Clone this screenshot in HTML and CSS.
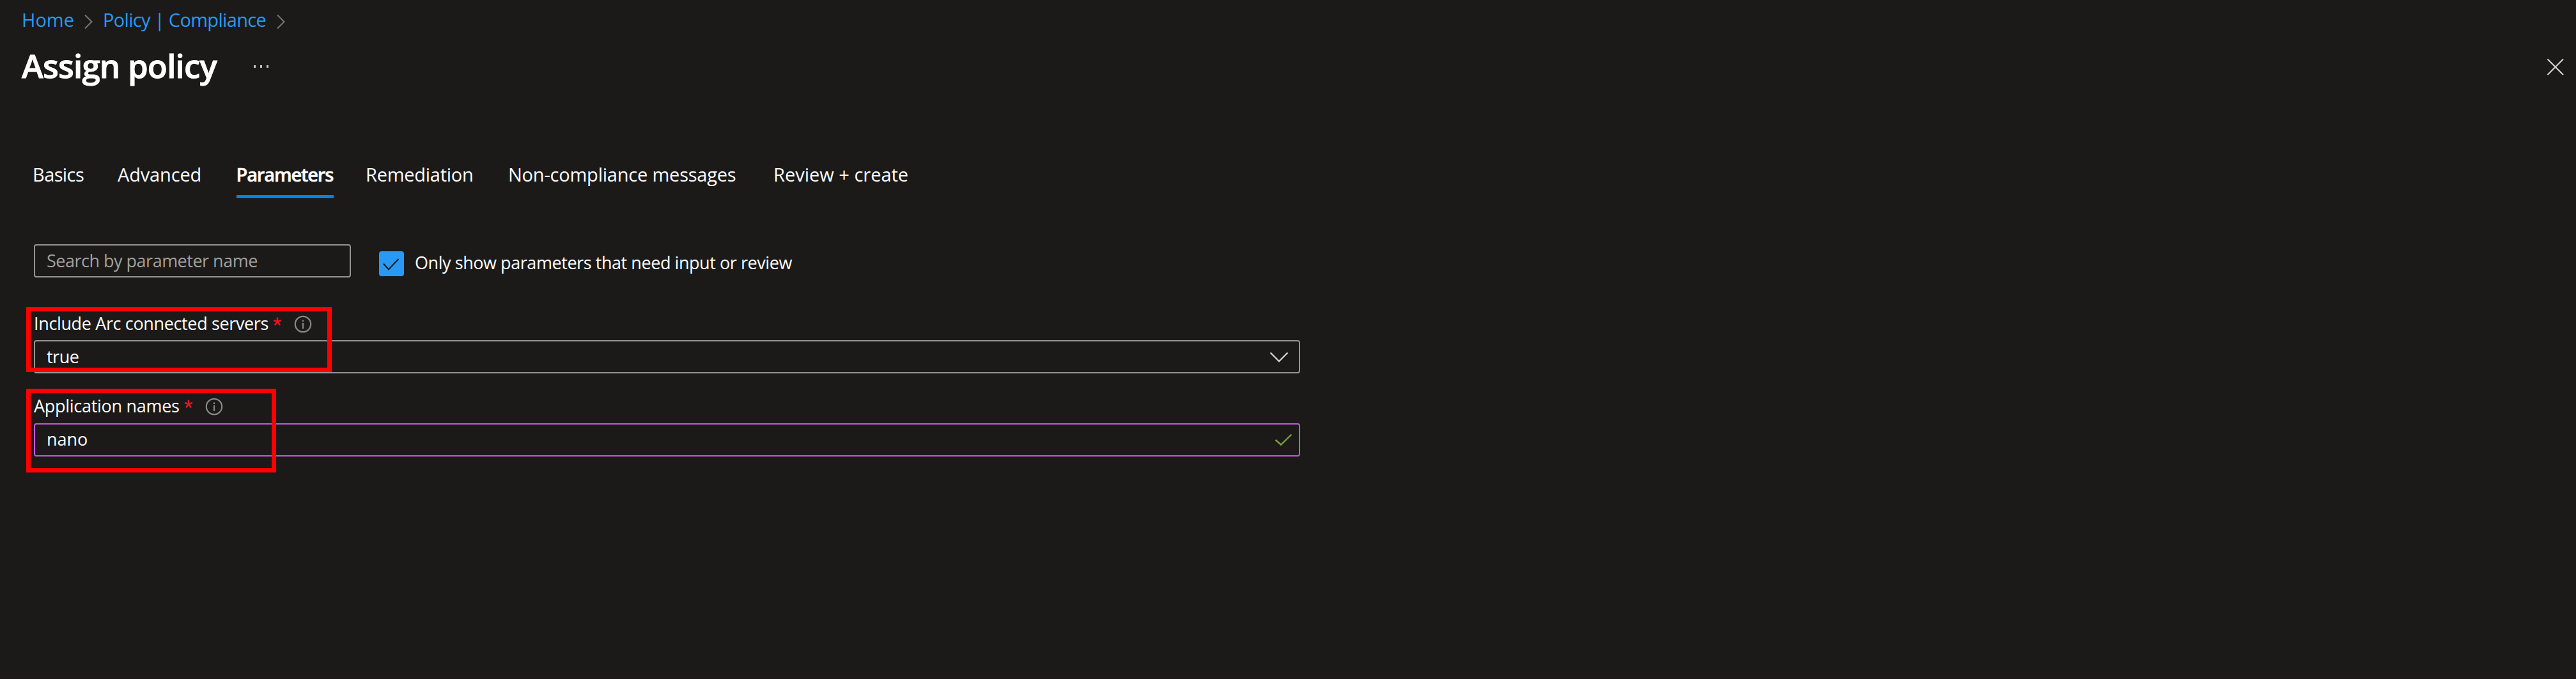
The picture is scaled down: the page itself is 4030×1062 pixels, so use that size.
FILE: index.html
```
<!DOCTYPE html>
<html lang="en">
<head>
<meta charset="utf-8">
<title>Assign policy</title>
<link rel="stylesheet" href="styles.css">
</head>
<body>
<main class="blade">
  <nav class="breadcrumb">
    <a class="crumb-home">Home</a>
    <svg class="crumb-arrow" viewBox="0 0 16 24"><path d="M2 1.5 12.5 12 2 22.5"/></svg>
    <a class="crumb-policy">Policy | Compliance</a>
    <svg class="crumb-arrow" viewBox="0 0 16 24"><path d="M2 1.5 12.5 12 2 22.5"/></svg>
  </nav>
  <header class="title-row">
    <h1>Assign policy</h1>
    <span class="more"><i></i><i></i><i></i></span>
    <svg class="close" viewBox="0 0 28 28"><path d="M1.5 1.5 26 26M26 1.5 1.5 26"/></svg>
  </header>
  <div class="tabs">
    <a class="tab basics">Basics</a>
    <a class="tab advanced">Advanced</a>
    <a class="tab active">Parameters</a>
    <a class="tab remediation">Remediation</a>
    <a class="tab messages">Non-compliance messages</a>
    <a class="tab">Review + create</a>
  </div>
  <div class="filters">
    <div class="box search">Search by parameter name</div>
    <span class="checkbox"><svg viewBox="0 0 39 39"><path d="M7 19.5 15 28.5 30.5 12"/></svg></span>
    <span class="check-label">Only show parameters that need input or review</span>
  </div>
  <section class="field arc">
    <div class="field-label">
      <span class="arc-name">Include Arc connected servers</span>
      <svg class="required" viewBox="0 0 14 14"><path d="M7 7V.5M7 7 13 5M7 7l4 5.5M7 7l-4 5.5M7 7 1 5"/></svg>
      <svg class="info" viewBox="0 0 28 28"><circle cx="14" cy="14" r="12.2"/><path d="M14 12v9M14 7.5v2.5"/></svg>
    </div>
    <div class="box select"><span>true</span><svg class="chevron" viewBox="0 0 30 18"><path d="M1.5 1.5 15 15 28.5 1.5"/></svg></div>
    <div class="mark"></div>
  </section>
  <section class="field app">
    <div class="field-label">
      <span class="app-name">Application names</span>
      <svg class="required" viewBox="0 0 14 14"><path d="M7 7V.5M7 7 13 5M7 7l4 5.5M7 7l-4 5.5M7 7 1 5"/></svg>
      <svg class="info" viewBox="0 0 28 28"><circle cx="14" cy="14" r="12.2"/><path d="M14 12v9M14 7.5v2.5"/></svg>
    </div>
    <div class="box edited"><span>nano</span><svg class="valid" viewBox="0 0 28 20"><path d="M1.5 10 10 17.5 26.5 1.5"/></svg></div>
    <div class="mark"></div>
  </section>
</main>
</body>
</html>
```
FILE: styles.css
```
* { box-sizing: border-box; }
body {
  margin: 0;
  background: #1b1a19;
  color: #fff;
  font-family: "Open Sans", "Noto Sans", sans-serif;
}
svg { display: block; fill: none; flex: none; }
.blade {
  height: 1062px;
  padding-top: 11px;
  border-bottom: 1px solid #1a1317;
  overflow: hidden;
}
.breadcrumb {
  display: flex;
  align-items: center;
  height: 40px;
  padding-left: 34px;
  font-size: 29px;
  line-height: 40px;
  color: #2899f5;
  white-space: nowrap;
}
.crumb-home { width: 97px; }
.crumb-policy { width: 271px; margin-left: 14px; letter-spacing: -0.68px; }
.crumb-arrow { width: 16px; height: 24px; margin-top: 6px; stroke: #797775; stroke-width: 2; }
.title-row {
  display: flex;
  align-items: center;
  height: 70px;
  margin-top: 16px;
  padding: 0 18px 0 34px;
}
h1 {
  width: 363px;
  margin: 0;
  font-size: 51px;
  line-height: 70px;
  font-weight: 600;
  letter-spacing: -0.8px;
  -webkit-text-stroke: 0.9px #fff;
  white-space: nowrap;
}
.more { display: flex; gap: 7px; margin-top: 4px; }
.more i { width: 3px; height: 4px; background: #c8c6c4; }
.close { width: 28px; height: 28px; margin: 5px 0 0 auto; stroke: #d2d0ce; stroke-width: 2.2; }
.tabs {
  display: grid;
  grid-template-columns: 133px 185.5px 202.5px 223px 415px auto;
  justify-content: start;
  margin: 116px 0 0 51px;
  font-size: 29px;
  line-height: 40px;
  white-space: nowrap;
}
.tab { justify-self: start; }
.basics { letter-spacing: -0.6px; }
.advanced { letter-spacing: -0.15px; }
.remediation { letter-spacing: -0.26px; }
.messages { letter-spacing: -0.21px; }
.active {
  width: 152px;
  padding-bottom: 12px;
  border-bottom: 5px solid #0082e6;
  font-weight: 600;
  letter-spacing: -1.15px;
  -webkit-text-stroke: 0.5px #fff;
}
.filters {
  display: flex;
  align-items: center;
  height: 52px;
  margin: 72px 0 0 53px;
  font-size: 27px;
  line-height: 40px;
  white-space: nowrap;
}
.box {
  display: flex;
  align-items: center;
  height: 52px;
  border: 2.5px solid #979593;
  border-radius: 4px;
  padding-left: 18px;
  font-size: 27px;
  line-height: 40px;
}
.search { width: 496px; color: #a19f9d; letter-spacing: -0.5px; }
.checkbox {
  width: 39px;
  height: 39px;
  margin: 9px 0 0 44px;
  border-radius: 4px;
  background: #2899f5;
}
.checkbox svg { width: 39px; height: 39px; stroke: #1b1a19; stroke-width: 2; }
.check-label { margin: 5px 0 0 17px; letter-spacing: -0.44px; }
.field { position: relative; width: 1981px; margin-left: 53px; }
.arc { margin-top: 52px; }
.app { margin-top: 31px; }
.field-label {
  display: flex;
  height: 40px;
  font-size: 27px;
  line-height: 40px;
  white-space: nowrap;
}
.arc-name { width: 374px; letter-spacing: -0.36px; }
.app-name { width: 235px; letter-spacing: -0.29px; }
.required { width: 14px; height: 14px; margin-top: 10px; stroke: #e81123; stroke-width: 2.6; }
.info { width: 28px; height: 28px; margin: 7px 0 0 19px; stroke: #8a8886; stroke-width: 2.2; }
.field .box { margin-top: 6px; }
.select { justify-content: space-between; padding-right: 16px; letter-spacing: -0.5px; }
.chevron { width: 30px; height: 18px; margin-top: 2px; stroke: #d2d0ce; stroke-width: 2.4; }
.field .edited { justify-content: space-between; margin-top: 7px; padding-right: 10px; border-color: #c556e0; }
.edited span { margin-top: -3px; }
.valid { width: 28px; height: 20px; stroke: #7c9f45; stroke-width: 2.4; }
.mark { position: absolute; left: -12px; top: -6px; border: 7px solid #f00; }
.arc .mark { width: 478px; height: 102px; }
.app .mark { top: -7px; width: 391px; height: 131px; }
```
